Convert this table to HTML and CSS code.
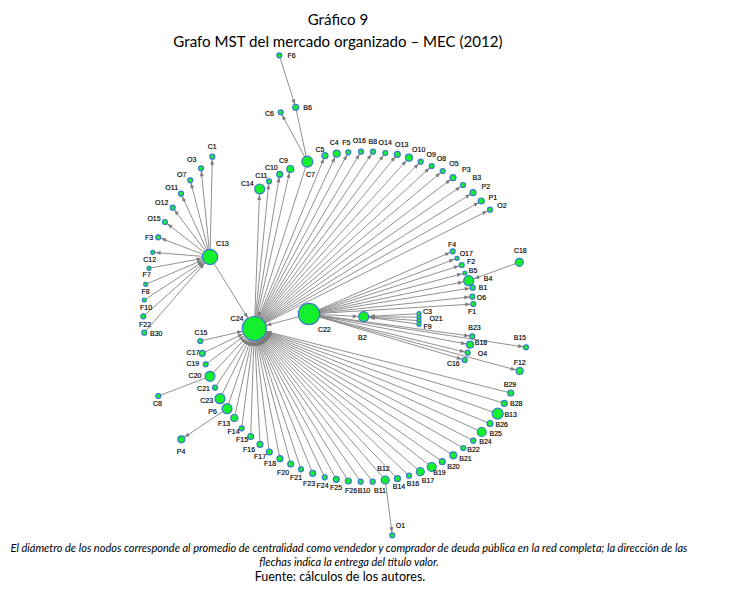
FILE: index.html
```html
<!DOCTYPE html>
<html lang="es">
<head>
<meta charset="utf-8">
<title>Gráfico 9</title>
<link rel="stylesheet" href="styles.css">
</head>
<body>
<div class="page">
  <header class="head">
    <div>Gráfico 9</div>
    <div>Grafo MST del mercado organizado – MEC (2012)</div>
  </header>
  <svg class="graph" viewBox="0 52 731 488" width="731" height="488" xmlns="http://www.w3.org/2000/svg">
    <defs>
      <marker id="m3" markerUnits="userSpaceOnUse" markerWidth="20" markerHeight="10" refX="8" refY="2" orient="auto" overflow="visible"><path class="ah" d="M0,0 L5,2 L0,4 z"/></marker>
      <marker id="m4" markerUnits="userSpaceOnUse" markerWidth="20" markerHeight="10" refX="9" refY="2" orient="auto" overflow="visible"><path class="ah" d="M0,0 L5,2 L0,4 z"/></marker>
      <marker id="m6" markerUnits="userSpaceOnUse" markerWidth="20" markerHeight="10" refX="11" refY="2" orient="auto" overflow="visible"><path class="ah" d="M0,0 L5,2 L0,4 z"/></marker>
      <marker id="m8" markerUnits="userSpaceOnUse" markerWidth="20" markerHeight="10" refX="13.5" refY="2" orient="auto" overflow="visible"><path class="ah" d="M0,0 L5,2 L0,4 z"/></marker>
      <marker id="m12" markerUnits="userSpaceOnUse" markerWidth="20" markerHeight="10" refX="17.5" refY="2" orient="auto" overflow="visible"><path class="ah" d="M0,0 L5,2 L0,4 z"/></marker>
    </defs>
    <g class="edges">
      <line x1="254.3" y1="328.5" x2="259.7" y2="189" marker-end="url(#m6)"/>
      <line x1="254.3" y1="328.5" x2="269" y2="181.3" marker-end="url(#m3)"/>
      <line x1="254.3" y1="328.5" x2="279.7" y2="174.3" marker-end="url(#m3)"/>
      <line x1="254.3" y1="328.5" x2="290.3" y2="169" marker-end="url(#m4)"/>
      <line x1="254.3" y1="328.5" x2="325" y2="155.7" marker-end="url(#m3)"/>
      <line x1="254.3" y1="328.5" x2="336.7" y2="153.7" marker-end="url(#m4)"/>
      <line x1="254.3" y1="328.5" x2="348.3" y2="152.3" marker-end="url(#m3)"/>
      <line x1="254.3" y1="328.5" x2="361" y2="151.7" marker-end="url(#m3)"/>
      <line x1="254.3" y1="328.5" x2="373" y2="151.7" marker-end="url(#m3)"/>
      <line x1="254.3" y1="328.5" x2="385.3" y2="153" marker-end="url(#m3)"/>
      <line x1="254.3" y1="328.5" x2="397.3" y2="154.3" marker-end="url(#m3)"/>
      <line x1="254.3" y1="328.5" x2="409" y2="157.7" marker-end="url(#m4)"/>
      <line x1="254.3" y1="328.5" x2="420.7" y2="161.7" marker-end="url(#m3)"/>
      <line x1="254.3" y1="328.5" x2="431.7" y2="166" marker-end="url(#m3)"/>
      <line x1="254.3" y1="328.5" x2="442.7" y2="171" marker-end="url(#m3)"/>
      <line x1="254.3" y1="328.5" x2="453" y2="177.7" marker-end="url(#m3)"/>
      <line x1="254.3" y1="328.5" x2="463" y2="185" marker-end="url(#m3)"/>
      <line x1="254.3" y1="328.5" x2="473" y2="192.7" marker-end="url(#m3)"/>
      <line x1="254.3" y1="328.5" x2="481.3" y2="201" marker-end="url(#m3)"/>
      <line x1="254.3" y1="328.5" x2="490" y2="209.7" marker-end="url(#m3)"/>
      <line x1="307.3" y1="161.7" x2="254.3" y2="328.5" marker-end="url(#m12)"/>
      <line x1="307.3" y1="161.7" x2="280.7" y2="112.3" marker-end="url(#m3)"/>
      <line x1="279.3" y1="55.3" x2="295.7" y2="107.3" marker-end="url(#m3)"/>
      <line x1="295.7" y1="107.3" x2="307.3" y2="161.7"/>
      <line x1="210" y1="257" x2="212.3" y2="156.7" marker-end="url(#m3)"/>
      <line x1="210" y1="257" x2="201" y2="168.3" marker-end="url(#m3)"/>
      <line x1="210" y1="257" x2="190.3" y2="180.3" marker-end="url(#m3)"/>
      <line x1="210" y1="257" x2="181" y2="193.7" marker-end="url(#m3)"/>
      <line x1="210" y1="257" x2="172.7" y2="207.7" marker-end="url(#m3)"/>
      <line x1="210" y1="257" x2="165" y2="222" marker-end="url(#m3)"/>
      <line x1="210" y1="257" x2="158.3" y2="237.3" marker-end="url(#m3)"/>
      <line x1="210" y1="257" x2="152.7" y2="252.3" marker-end="url(#m3)"/>
      <line x1="149" y1="268.3" x2="210" y2="257" marker-end="url(#m8)"/>
      <line x1="145.7" y1="284.3" x2="210" y2="257" marker-end="url(#m8)"/>
      <line x1="144.3" y1="300" x2="210" y2="257" marker-end="url(#m8)"/>
      <line x1="143.3" y1="316.3" x2="210" y2="257" marker-end="url(#m8)"/>
      <line x1="144.3" y1="332.7" x2="210" y2="257" marker-end="url(#m8)"/>
      <line x1="210" y1="257" x2="254.3" y2="328.5" marker-end="url(#m12)"/>
      <line x1="309" y1="314" x2="254.3" y2="328.5" marker-end="url(#m12)"/>
      <line x1="309" y1="314" x2="452.7" y2="251.3" marker-end="url(#m3)"/>
      <line x1="309" y1="314" x2="457" y2="258.3" marker-end="url(#m3)"/>
      <line x1="309" y1="314" x2="461.7" y2="265" marker-end="url(#m3)"/>
      <line x1="309" y1="314" x2="465" y2="273" marker-end="url(#m3)"/>
      <line x1="309" y1="314" x2="468.7" y2="280.7" marker-end="url(#m6)"/>
      <line x1="309" y1="314" x2="472.7" y2="287.7" marker-end="url(#m3)"/>
      <line x1="309" y1="314" x2="472.3" y2="296.7" marker-end="url(#m3)"/>
      <line x1="309" y1="314" x2="473.3" y2="304" marker-end="url(#m3)"/>
      <line x1="519.3" y1="262.3" x2="468.7" y2="280.7" marker-end="url(#m6)"/>
      <line x1="309" y1="314" x2="363.7" y2="316.7" marker-end="url(#m6)"/>
      <line x1="419" y1="313.7" x2="363.7" y2="316.7" marker-end="url(#m6)"/>
      <line x1="419" y1="317.2" x2="363.7" y2="316.7" marker-end="url(#m6)"/>
      <line x1="419" y1="320.7" x2="363.7" y2="316.7" marker-end="url(#m6)"/>
      <line x1="419" y1="324.2" x2="363.7" y2="316.7" marker-end="url(#m6)"/>
      <line x1="309" y1="314" x2="472.3" y2="336.3" marker-end="url(#m3)"/>
      <line x1="309" y1="314" x2="470" y2="344.7" marker-end="url(#m4)"/>
      <line x1="309" y1="314" x2="467.7" y2="352.7" marker-end="url(#m3)"/>
      <line x1="309" y1="314" x2="464.7" y2="360" marker-end="url(#m3)"/>
      <line x1="309" y1="314" x2="526" y2="347.3" marker-end="url(#m3)"/>
      <line x1="309" y1="314" x2="519.7" y2="371" marker-end="url(#m4)"/>
      <line x1="200.3" y1="341" x2="254.3" y2="328.5" marker-end="url(#m12)"/>
      <line x1="202.3" y1="353.3" x2="254.3" y2="328.5" marker-end="url(#m12)"/>
      <line x1="205.7" y1="364.3" x2="254.3" y2="328.5" marker-end="url(#m12)"/>
      <line x1="210" y1="376.3" x2="254.3" y2="328.5" marker-end="url(#m12)"/>
      <line x1="215" y1="387.7" x2="254.3" y2="328.5" marker-end="url(#m12)"/>
      <line x1="220" y1="398.7" x2="254.3" y2="328.5" marker-end="url(#m12)"/>
      <line x1="227" y1="408.7" x2="254.3" y2="328.5" marker-end="url(#m12)"/>
      <line x1="234.3" y1="418" x2="254.3" y2="328.5" marker-end="url(#m12)"/>
      <line x1="241.7" y1="428.3" x2="254.3" y2="328.5" marker-end="url(#m12)"/>
      <line x1="250.7" y1="436.5" x2="254.3" y2="328.5" marker-end="url(#m12)"/>
      <line x1="260" y1="444.3" x2="254.3" y2="328.5" marker-end="url(#m12)"/>
      <line x1="269.3" y1="452" x2="254.3" y2="328.5" marker-end="url(#m12)"/>
      <line x1="280" y1="458.7" x2="254.3" y2="328.5" marker-end="url(#m12)"/>
      <line x1="290.7" y1="464" x2="254.3" y2="328.5" marker-end="url(#m12)"/>
      <line x1="301" y1="469.3" x2="254.3" y2="328.5" marker-end="url(#m12)"/>
      <line x1="312.7" y1="473.3" x2="254.3" y2="328.5" marker-end="url(#m12)"/>
      <line x1="324.7" y1="477.3" x2="254.3" y2="328.5" marker-end="url(#m12)"/>
      <line x1="336.3" y1="479.3" x2="254.3" y2="328.5" marker-end="url(#m12)"/>
      <line x1="348.3" y1="481" x2="254.3" y2="328.5" marker-end="url(#m12)"/>
      <line x1="360.7" y1="481.7" x2="254.3" y2="328.5" marker-end="url(#m12)"/>
      <line x1="372.7" y1="481.7" x2="254.3" y2="328.5" marker-end="url(#m12)"/>
      <line x1="385.2" y1="480" x2="254.3" y2="328.5" marker-end="url(#m12)"/>
      <line x1="397.5" y1="478.7" x2="254.3" y2="328.5" marker-end="url(#m12)"/>
      <line x1="409" y1="475.7" x2="254.3" y2="328.5" marker-end="url(#m12)"/>
      <line x1="420.3" y1="471.7" x2="254.3" y2="328.5" marker-end="url(#m12)"/>
      <line x1="431.7" y1="467" x2="254.3" y2="328.5" marker-end="url(#m12)"/>
      <line x1="442.3" y1="461.7" x2="254.3" y2="328.5" marker-end="url(#m12)"/>
      <line x1="453.3" y1="455.3" x2="254.3" y2="328.5" marker-end="url(#m12)"/>
      <line x1="463.3" y1="448" x2="254.3" y2="328.5" marker-end="url(#m12)"/>
      <line x1="473.3" y1="440.7" x2="254.3" y2="328.5" marker-end="url(#m12)"/>
      <line x1="481.7" y1="432" x2="254.3" y2="328.5" marker-end="url(#m12)"/>
      <line x1="490" y1="423.5" x2="254.3" y2="328.5" marker-end="url(#m12)"/>
      <line x1="497.7" y1="413.7" x2="254.3" y2="328.5" marker-end="url(#m12)"/>
      <line x1="504.3" y1="403.3" x2="254.3" y2="328.5" marker-end="url(#m12)"/>
      <line x1="510.7" y1="393" x2="254.3" y2="328.5" marker-end="url(#m12)"/>
      <line x1="158.3" y1="396" x2="210" y2="376.3"/>
      <line x1="227" y1="408.7" x2="181.3" y2="439.3" marker-end="url(#m4)"/>
      <line x1="385.2" y1="480" x2="392.3" y2="535.3" marker-end="url(#m3)"/>
    </g>
    <g class="nodes">
      <circle cx="279.3" cy="55.3" r="2.5"/>
      <circle cx="295.7" cy="107.3" r="3"/>
      <circle cx="280.7" cy="112.3" r="2.5"/>
      <circle cx="307.3" cy="161.7" r="5.5"/>
      <circle cx="325" cy="155.7" r="3"/>
      <circle cx="290.3" cy="169" r="3.5"/>
      <circle cx="279.7" cy="174.3" r="3"/>
      <circle cx="269" cy="181.3" r="2.5"/>
      <circle cx="259.7" cy="189" r="5"/>
      <circle cx="212.3" cy="156.7" r="2.5"/>
      <circle cx="201" cy="168.3" r="2.5"/>
      <circle cx="190.3" cy="180.3" r="2.5"/>
      <circle cx="181" cy="193.7" r="2.5"/>
      <circle cx="172.7" cy="207.7" r="2.5"/>
      <circle cx="165" cy="222" r="2.5"/>
      <circle cx="158.3" cy="237.3" r="2.5"/>
      <circle cx="152.7" cy="252.3" r="2"/>
      <circle cx="149" cy="268.3" r="2"/>
      <circle cx="145.7" cy="284.3" r="2"/>
      <circle cx="144.3" cy="300" r="2"/>
      <circle cx="143.3" cy="316.3" r="2.5"/>
      <circle cx="144.3" cy="332.7" r="2.5"/>
      <circle cx="210" cy="257" r="7.7"/>
      <circle cx="254.3" cy="328.5" r="12"/>
      <circle cx="200.3" cy="341" r="2.5"/>
      <circle cx="336.7" cy="153.7" r="3.5"/>
      <circle cx="348.3" cy="152.3" r="2.5"/>
      <circle cx="361" cy="151.7" r="2.5"/>
      <circle cx="373" cy="151.7" r="2.5"/>
      <circle cx="385.3" cy="153" r="2.5"/>
      <circle cx="397.3" cy="154.3" r="3"/>
      <circle cx="409" cy="157.7" r="3.5"/>
      <circle cx="420.7" cy="161.7" r="2.5"/>
      <circle cx="431.7" cy="166" r="2.5"/>
      <circle cx="442.7" cy="171" r="2.5"/>
      <circle cx="453" cy="177.7" r="3"/>
      <circle cx="463" cy="185" r="2.5"/>
      <circle cx="473" cy="192.7" r="3"/>
      <circle cx="481.3" cy="201" r="3"/>
      <circle cx="490" cy="209.7" r="2.5"/>
      <circle cx="309" cy="314" r="10.7"/>
      <circle cx="363.7" cy="316.7" r="5"/>
      <circle cx="419" cy="313.7" r="2"/>
      <circle cx="419" cy="317.2" r="2"/>
      <circle cx="419" cy="320.7" r="2"/>
      <circle cx="419" cy="324.2" r="2"/>
      <circle cx="452.7" cy="251.3" r="2.5"/>
      <circle cx="457" cy="258.3" r="2"/>
      <circle cx="461.7" cy="265" r="2.5"/>
      <circle cx="465" cy="273" r="2"/>
      <circle cx="468.7" cy="280.7" r="5"/>
      <circle cx="472.7" cy="287.7" r="2.5"/>
      <circle cx="472.3" cy="296.7" r="2.5"/>
      <circle cx="473.3" cy="304" r="2.5"/>
      <circle cx="519.3" cy="262.3" r="4"/>
      <circle cx="472.3" cy="336.3" r="2.5"/>
      <circle cx="526" cy="347.3" r="2.5"/>
      <circle cx="470" cy="344.7" r="3.5"/>
      <circle cx="467.7" cy="352.7" r="2.5"/>
      <circle cx="464.7" cy="360" r="2.5"/>
      <circle cx="519.7" cy="371" r="3.5"/>
      <circle cx="510.7" cy="393" r="3"/>
      <circle cx="504.3" cy="403.3" r="3"/>
      <circle cx="497.7" cy="413.7" r="5.5"/>
      <circle cx="490" cy="423.5" r="3"/>
      <circle cx="481.7" cy="432" r="4.5"/>
      <circle cx="473.3" cy="440.7" r="2.5"/>
      <circle cx="463.3" cy="448" r="2.5"/>
      <circle cx="453.3" cy="455.3" r="3.5"/>
      <circle cx="442.3" cy="461.7" r="3"/>
      <circle cx="431.7" cy="467" r="4.5"/>
      <circle cx="420.3" cy="471.7" r="4"/>
      <circle cx="409" cy="475.7" r="2.5"/>
      <circle cx="397.5" cy="478.7" r="3"/>
      <circle cx="385.2" cy="480" r="4"/>
      <circle cx="372.7" cy="481.7" r="2.5"/>
      <circle cx="360.7" cy="481.7" r="2.5"/>
      <circle cx="348.3" cy="481" r="3"/>
      <circle cx="336.3" cy="479.3" r="3"/>
      <circle cx="324.7" cy="477.3" r="2.5"/>
      <circle cx="312.7" cy="473.3" r="3"/>
      <circle cx="301" cy="469.3" r="2.5"/>
      <circle cx="290.7" cy="464" r="3"/>
      <circle cx="280" cy="458.7" r="3"/>
      <circle cx="269.3" cy="452" r="3"/>
      <circle cx="260" cy="444.3" r="3"/>
      <circle cx="250.7" cy="436.5" r="3"/>
      <circle cx="241.7" cy="428.3" r="2.5"/>
      <circle cx="234.3" cy="418" r="3.5"/>
      <circle cx="227" cy="408.7" r="5"/>
      <circle cx="220" cy="398.7" r="5"/>
      <circle cx="215" cy="387.7" r="2.5"/>
      <circle cx="210" cy="376.3" r="5"/>
      <circle cx="205.7" cy="364.3" r="2.5"/>
      <circle cx="202.3" cy="353.3" r="3"/>
      <circle cx="158.3" cy="396" r="2.5"/>
      <circle cx="181.3" cy="439.3" r="3.5"/>
      <circle cx="392.3" cy="535.3" r="2.5"/>
    </g>
    <g class="labels">
      <text x="291.5" y="55">F6</text>
      <text x="307.5" y="107">B6</text>
      <text x="269.5" y="113">C6</text>
      <text x="310.5" y="174.3">C7</text>
      <text x="320" y="149.3">C5</text>
      <text x="283.5" y="160.7">C9</text>
      <text x="271.3" y="167.3">C10</text>
      <text x="261.3" y="175.7">C11</text>
      <text x="247.3" y="183.3">C14</text>
      <text x="212.2" y="146.7">C1</text>
      <text x="191.7" y="159">O3</text>
      <text x="181.7" y="174.3">O7</text>
      <text x="171.7" y="187.7">O11</text>
      <text x="161.7" y="202">O12</text>
      <text x="154" y="218">O15</text>
      <text x="149" y="237">F3</text>
      <text x="149.7" y="259.3">C12</text>
      <text x="146.7" y="274.3">F7</text>
      <text x="145.5" y="291.7">F8</text>
      <text x="146" y="307.3">F10</text>
      <text x="145" y="324.3">F22</text>
      <text x="156.3" y="333.3">B30</text>
      <text x="222.3" y="243.3">C13</text>
      <text x="237" y="318.7">C24</text>
      <text x="201" y="332.7">C15</text>
      <text x="334.3" y="142.7">C4</text>
      <text x="346.3" y="142.3">F5</text>
      <text x="359.3" y="140.7">O16</text>
      <text x="372.8" y="141.7">B8</text>
      <text x="385.2" y="142.7">O14</text>
      <text x="401.7" y="144.3">O13</text>
      <text x="418.7" y="149.3">O10</text>
      <text x="431.2" y="154">O9</text>
      <text x="441.5" y="158.7">O8</text>
      <text x="454" y="163.3">O5</text>
      <text x="466.3" y="169.3">P3</text>
      <text x="476.8" y="177.3">B3</text>
      <text x="485.8" y="186">P2</text>
      <text x="492.8" y="197">P1</text>
      <text x="502" y="205">O2</text>
      <text x="324.3" y="329.3">C22</text>
      <text x="362.3" y="337.7">B2</text>
      <text x="427.5" y="311.3">C3</text>
      <text x="436" y="318.7">O21</text>
      <text x="427.5" y="326.7">F9</text>
      <text x="452" y="244">F4</text>
      <text x="466.3" y="253.3">O17</text>
      <text x="471" y="261.3">F2</text>
      <text x="473" y="270.3">B5</text>
      <text x="488" y="278.3">B4</text>
      <text x="483" y="287.3">B1</text>
      <text x="481.5" y="297.3">O6</text>
      <text x="472" y="311">F1</text>
      <text x="520.3" y="250.7">C18</text>
      <text x="474.5" y="327.3">B23</text>
      <text x="520" y="337.3">B15</text>
      <text x="481" y="342.7">B18</text>
      <text x="482.5" y="353.3">O4</text>
      <text x="453.3" y="363.3">C16</text>
      <text x="519.7" y="362.3">F12</text>
      <text x="510" y="384">B29</text>
      <text x="516.3" y="403.3">B28</text>
      <text x="510.7" y="414.3">B13</text>
      <text x="501.8" y="424.3">B26</text>
      <text x="495.8" y="433.3">B25</text>
      <text x="485.5" y="441.7">B24</text>
      <text x="473.5" y="449.3">B22</text>
      <text x="465.5" y="458.7">B21</text>
      <text x="453.5" y="466.7">B20</text>
      <text x="439.5" y="472.7">B19</text>
      <text x="428" y="480">B17</text>
      <text x="413" y="483.3">B16</text>
      <text x="399" y="486.7">B14</text>
      <text x="383.5" y="468.3">B12</text>
      <text x="380" y="490.7">B11</text>
      <text x="364" y="490.7">B10</text>
      <text x="351" y="490.7">F26</text>
      <text x="336" y="487.3">F25</text>
      <text x="322.5" y="485">F24</text>
      <text x="309" y="483.3">F23</text>
      <text x="296" y="477.3">F21</text>
      <text x="283" y="472">F20</text>
      <text x="270" y="463.3">F18</text>
      <text x="260" y="456">F17</text>
      <text x="249" y="449.3">F16</text>
      <text x="242" y="439">F15</text>
      <text x="233.5" y="431.3">F14</text>
      <text x="224" y="423.3">F13</text>
      <text x="212.5" y="411">P6</text>
      <text x="206.7" y="400.3">C23</text>
      <text x="203.5" y="388.7">C21</text>
      <text x="195" y="375">C20</text>
      <text x="192.8" y="363.7">C19</text>
      <text x="193" y="352.7">C17</text>
      <text x="157.5" y="403.3">C8</text>
      <text x="181" y="451">P4</text>
      <text x="400.5" y="525.7">O1</text>
    </g>
  </svg>
  <p class="caption">El diámetro de los nodos corresponde al promedio de centralidad como vendedor y comprador de deuda pública en la red completa; la dirección de las<br>flechas indica la entrega del título valor.</p>
  <p class="source">Fuente: cálculos de los autores.</p>
</div>
</body>
</html>
```

FILE: styles.css
```css
html, body {
  margin: 0;
  padding: 0;
  background: #ffffff;
}

.page {
  width: 731px;
  color: #000;
  font-family: Lato, "Liberation Sans", sans-serif;
}

.head {
  width: 676px;
  padding-top: 8px;
  text-align: center;
  font-size: 15.1px;
  line-height: 22px;
}

.graph {
  display: block;
  width: 731px;
  height: 488px;
}

.edges line {
  stroke: #858585;
  stroke-width: 0.9;
}

.ah {
  fill: #7c7c7c;
}

.nodes circle {
  fill: #14f02e;
  stroke: #3a7acb;
  stroke-width: 1.2;
}

.labels text {
  font-family: "Liberation Sans", Arial, sans-serif;
  font-size: 7px;
  fill: #000;
  stroke: #000;
  stroke-width: 0.15;
  text-anchor: middle;
  dominant-baseline: central;
}

.caption {
  margin: 0;
  width: 698px;
  text-align: center;
  font-style: italic;
  font-size: 11px;
  line-height: 14px;
  padding-top: 1px;
}

.source {
  margin: 0;
  width: 680px;
  text-align: center;
  font-size: 12.5px;
  line-height: 16px;
}
```
